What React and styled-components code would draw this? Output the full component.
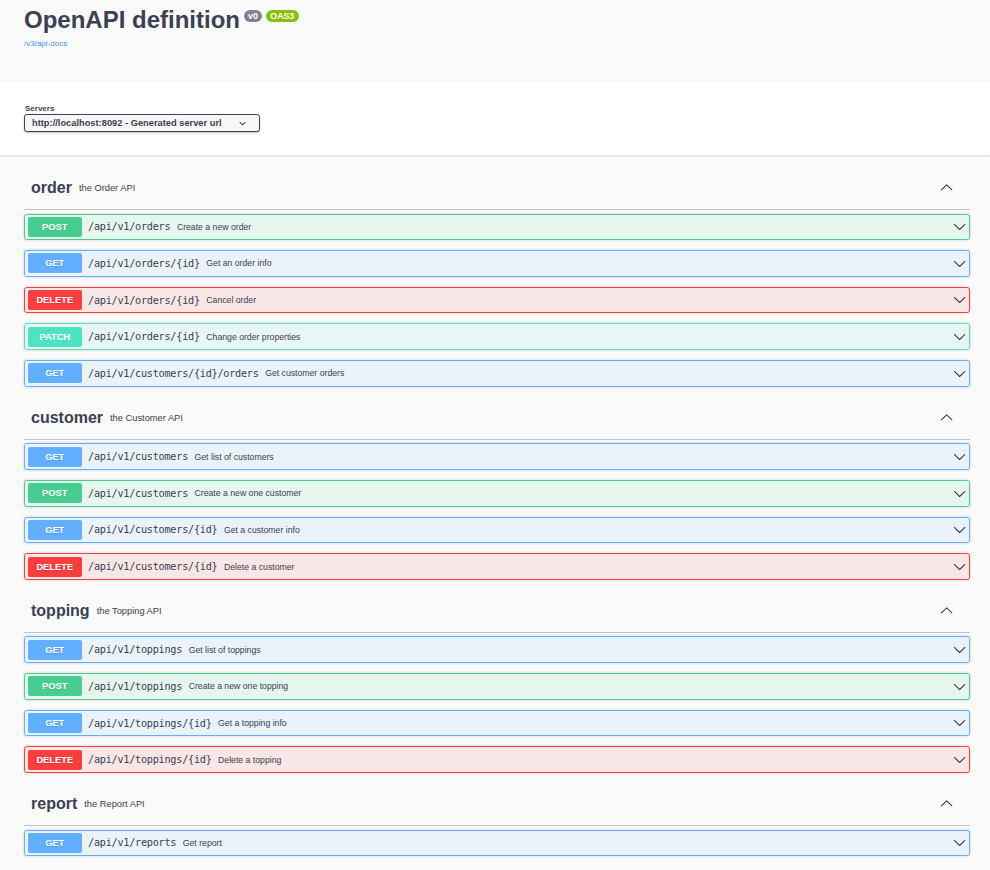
import styled, { createGlobalStyle } from "styled-components";

const METHODS = {
  GET: { color: "#61affe", bg: "rgba(97,175,254,.1)" },
  POST: { color: "#49cc90", bg: "rgba(73,204,144,.1)" },
  DELETE: { color: "#f93e3e", bg: "rgba(249,62,62,.1)" },
  PATCH: { color: "#50e3c2", bg: "rgba(80,227,194,.1)" },
};

const TAGS = [
  {
    name: "order",
    desc: "the Order API",
    ops: [
      ["POST", "/api/v1/orders", "Create a new order"],
      ["GET", "/api/v1/orders/{id}", "Get an order info"],
      ["DELETE", "/api/v1/orders/{id}", "Cancel order"],
      ["PATCH", "/api/v1/orders/{id}", "Change order properties"],
      ["GET", "/api/v1/customers/{id}/orders", "Get customer orders"],
    ],
  },
  {
    name: "customer",
    desc: "the Customer API",
    ops: [
      ["GET", "/api/v1/customers", "Get list of customers"],
      ["POST", "/api/v1/customers", "Create a new one customer"],
      ["GET", "/api/v1/customers/{id}", "Get a customer info"],
      ["DELETE", "/api/v1/customers/{id}", "Delete a customer"],
    ],
  },
  {
    name: "topping",
    desc: "the Topping API",
    ops: [
      ["GET", "/api/v1/toppings", "Get list of toppings"],
      ["POST", "/api/v1/toppings", "Create a new one topping"],
      ["GET", "/api/v1/toppings/{id}", "Get a topping info"],
      ["DELETE", "/api/v1/toppings/{id}", "Delete a topping"],
    ],
  },
  {
    name: "report",
    desc: "the Report API",
    ops: [["GET", "/api/v1/reports", "Get report"]],
  },
];

function Chevron({ up }) {
  return (
    <ArrowSvg viewBox="0 0 20 20" $up={up}>
      <path d="M17.418 6.109c.272-.268.709-.268.979 0s.271.701 0 .969l-7.908 7.83c-.27.268-.707.268-.979 0l-7.908-7.83c-.27-.268-.27-.701 0-.969.271-.268.709-.268.979 0L10 13.25l7.418-7.141z" />
    </ArrowSvg>
  );
}

export default function App() {
  return (
    <>
      <GlobalStyle />
      <Info>
        <Title>
          OpenAPI definition
          <Badge $bg="#7d8492">v0</Badge>
          <Badge $bg="#89bf04">OAS3</Badge>
        </Title>
        <BaseUrl>/v3/api-docs</BaseUrl>
      </Info>
      <SchemeContainer>
        <ServersLabel>Servers</ServersLabel>
        <SelectBox>
          <span>http://localhost:8092 - Generated server url</span>
          <SmallChevron viewBox="0 0 20 20">
            <path d="M13.418 7.859a.695.695 0 01.978 0 .68.68 0 010 .969l-3.908 3.83a.697.697 0 01-.979 0l-3.908-3.83a.68.68 0 010-.969.695.695 0 01.978 0L10 11l3.418-3.141z" />
          </SmallChevron>
        </SelectBox>
      </SchemeContainer>
      <Wrapper>
        {TAGS.map((tag) => (
          <TagSection key={tag.name}>
            <TagHeader>
              <TagName>{tag.name}</TagName>
              <TagDesc>{tag.desc}</TagDesc>
              <TagArrow>
                <Chevron up />
              </TagArrow>
            </TagHeader>
            <OpList>
              {tag.ops.map(([method, path, summary], i) => (
                <OpBlock key={i} $method={method}>
                  <Method $method={method}>{method}</Method>
                  <Path>{path}</Path>
                  <Summary>{summary}</Summary>
                  <Chevron />
                </OpBlock>
              ))}
            </OpList>
          </TagSection>
        ))}
      </Wrapper>
    </>
  );
}

const GlobalStyle = createGlobalStyle`
  html, body {
    margin: 0;
    background: #fafafa;
    font-family: "Liberation Sans", Arial, sans-serif;
    color: #3b4151;
  }
`;

const Info = styled.div`
  box-sizing: border-box;
  height: 82px;
  padding: 5px 24px 0;
`;

const Title = styled.h2`
  margin: 0;
  font-size: 24px;
  line-height: 30px;
  font-weight: 700;
  color: #3b4151;
  display: flex;
  align-items: flex-start;
`;

const Badge = styled.small`
  margin: 5px 0 0 3.5px;
  padding: 1.5px 4.5px;
  border-radius: 40px;
  background: ${(p) => p.$bg};
  color: #fff;
  font-size: 8.8px;
  line-height: 9px;
  font-weight: 700;
  font-family: "Liberation Sans", Arial, sans-serif;
`;

const BaseUrl = styled.a`
  display: block;
  margin-top: 3px;
  font-size: 8px;
  line-height: 11px;
  color: #4990e2;
  text-decoration: none;
`;

const SchemeContainer = styled.div`
  box-sizing: border-box;
  height: 73px;
  padding: 22px 24px 0;
  background: #fff;
  box-shadow: 0 1px 2px 0 rgba(0, 0, 0, 0.15);
`;

const ServersLabel = styled.div`
  font-size: 8px;
  line-height: 10px;
  font-weight: 700;
  color: #3b4151;
  margin-left: 1px;
`;

const SelectBox = styled.div`
  box-sizing: border-box;
  width: 236px;
  height: 18px;
  display: flex;
  align-items: center;
  justify-content: space-between;
  padding: 0 10px 0 7px;
  border: 1.3px solid #41444e;
  border-radius: 3px;
  box-shadow: 0 1px 2px 0 rgba(0, 0, 0, 0.25);
  background: #f7f7f7;
  font-size: 9.3px;
  font-weight: 700;
  color: #3b4151;
`;

const SmallChevron = styled.svg`
  width: 13px;
  height: 13px;
  fill: #303030;
`;

const Wrapper = styled.div`
  padding: 12px 20px 0 24px;
`;

const TagSection = styled.section``;

const TagHeader = styled.div`
  box-sizing: border-box;
  height: 43px;
  display: flex;
  align-items: center;
  padding: 0 13px 0 7px;
  border-bottom: 1px solid rgba(59, 65, 81, 0.3);
`;

const TagName = styled.span`
  font-size: 16px;
  font-weight: 700;
  color: #3b4151;
`;

const TagDesc = styled.small`
  flex: 1;
  padding: 0 7px;
  font-size: 9.3px;
  color: #3b4151;
`;

const TagArrow = styled.span`
  display: flex;
  margin-right: 4px;
`;

const ArrowSvg = styled.svg`
  width: 13.3px;
  height: 13.3px;
  fill: #303030;
  transform: ${(p) => (p.$up ? "rotate(180deg)" : "none")};
`;

const OpList = styled.div`
  padding-top: 3.5px;
`;

const OpBlock = styled.div`
  box-sizing: border-box;
  height: 26.67px;
  margin-bottom: 10px;
  display: flex;
  align-items: center;
  padding: 0 3px;
  border: 1px solid ${(p) => METHODS[p.$method].color};
  border-radius: 2.67px;
  background: ${(p) => METHODS[p.$method].bg};
  box-shadow: 0 0 3px rgba(0, 0, 0, 0.19);
`;

const Method = styled.span`
  box-sizing: border-box;
  width: 53.5px;
  height: 20px;
  line-height: 20px;
  text-align: center;
  border-radius: 2px;
  background: ${(p) => METHODS[p.$method].color};
  color: #fff;
  font-size: 9.3px;
  font-weight: 700;
  text-shadow: 0 1px 0 rgba(0, 0, 0, 0.1);
`;

const Path = styled.span`
  padding: 0 6.5px;
  font-family: "DejaVu Sans Mono", "Liberation Mono", monospace;
  font-size: 10.2px;
  letter-spacing: -0.25px;
  color: #3b4151;
`;

const Summary = styled.span`
  flex: 1;
  font-size: 8.7px;
  color: #3b4151;
`;
